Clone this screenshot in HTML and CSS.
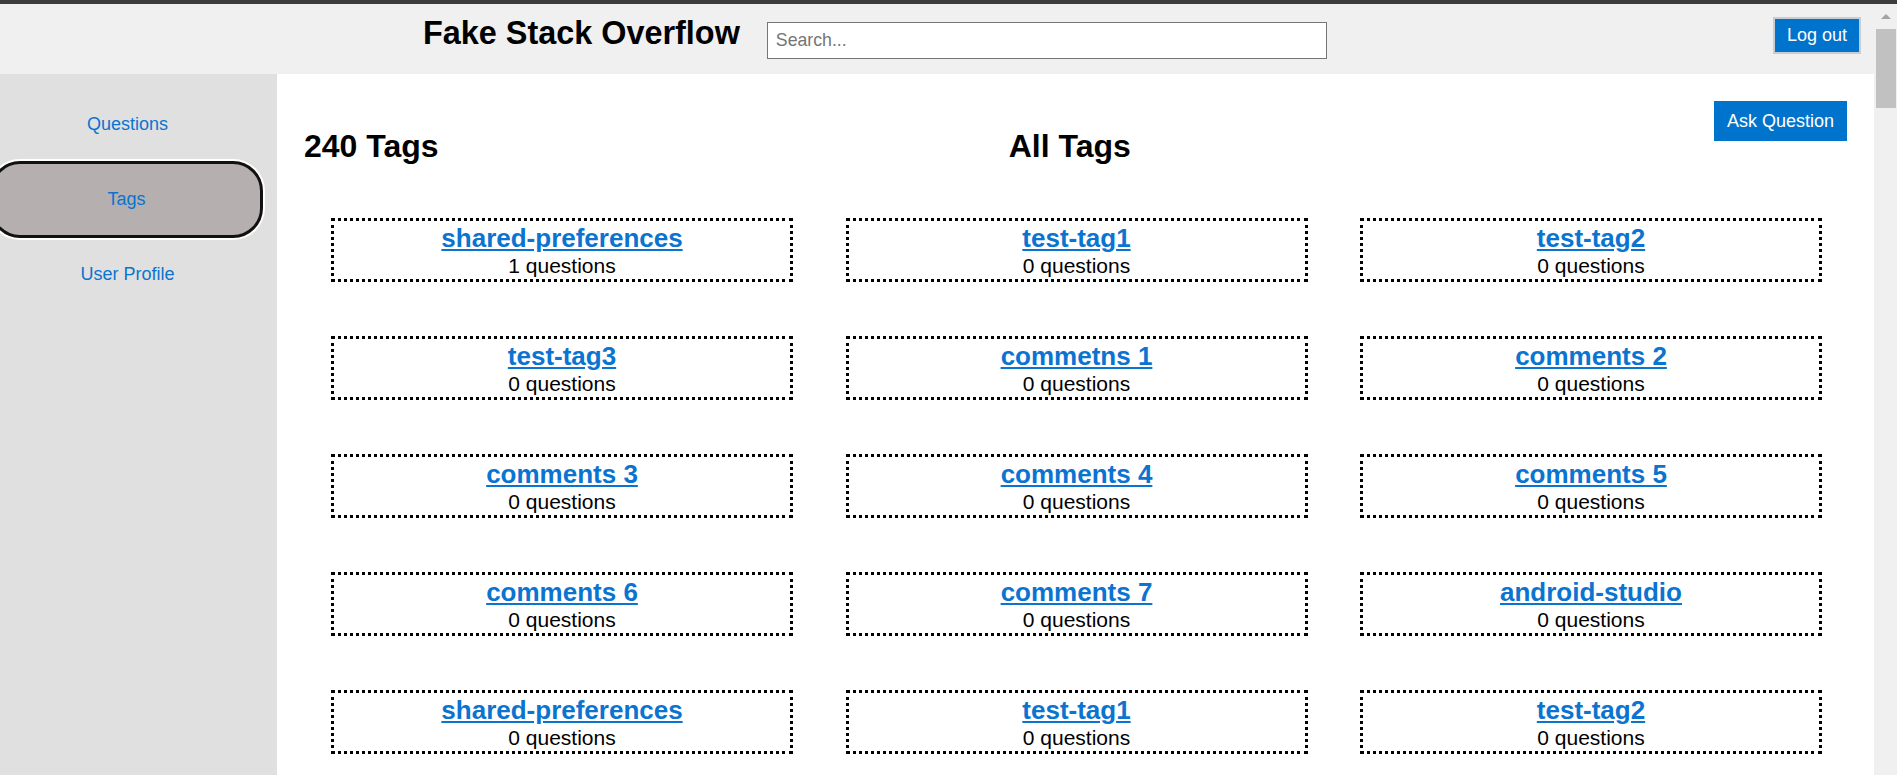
FILE: index.html
```html
<!DOCTYPE html>
<html lang="en">
<head>
<meta charset="utf-8">
<title>Fake Stack Overflow</title>
<link rel="stylesheet" href="styles.css">
</head>
<body>
<div class="topbar"></div>
<div class="frame">
  <div class="page">
    <header class="header">
      <h1 class="site-title">Fake Stack Overflow</h1>
      <input class="search" type="text" placeholder="Search...">
      <button class="logout">Log out</button>
    </header>
    <div class="content">
      <nav class="sidebar">
        <a class="nav-item" href="#">Questions</a>
        <a class="nav-item active" href="#">Tags</a>
        <a class="nav-item" href="#">User Profile</a>
      </nav>
      <main class="main">
        <div class="main-head">
          <h1 class="head-title">240 Tags</h1>
          <h1 class="head-title">All Tags</h1>
          <button class="ask">Ask Question</button>
        </div>
        <div class="tag-grid">
          <div class="tag-card"><a class="tag-name" href="#">shared-preferences</a><div class="tag-count">1 questions</div></div>
          <div class="tag-card"><a class="tag-name" href="#">test-tag1</a><div class="tag-count">0 questions</div></div>
          <div class="tag-card"><a class="tag-name" href="#">test-tag2</a><div class="tag-count">0 questions</div></div>
          <div class="tag-card"><a class="tag-name" href="#">test-tag3</a><div class="tag-count">0 questions</div></div>
          <div class="tag-card"><a class="tag-name" href="#">commetns 1</a><div class="tag-count">0 questions</div></div>
          <div class="tag-card"><a class="tag-name" href="#">comments 2</a><div class="tag-count">0 questions</div></div>
          <div class="tag-card"><a class="tag-name" href="#">comments 3</a><div class="tag-count">0 questions</div></div>
          <div class="tag-card"><a class="tag-name" href="#">comments 4</a><div class="tag-count">0 questions</div></div>
          <div class="tag-card"><a class="tag-name" href="#">comments 5</a><div class="tag-count">0 questions</div></div>
          <div class="tag-card"><a class="tag-name" href="#">comments 6</a><div class="tag-count">0 questions</div></div>
          <div class="tag-card"><a class="tag-name" href="#">comments 7</a><div class="tag-count">0 questions</div></div>
          <div class="tag-card"><a class="tag-name" href="#">android-studio</a><div class="tag-count">0 questions</div></div>
          <div class="tag-card"><a class="tag-name" href="#">shared-preferences</a><div class="tag-count">0 questions</div></div>
          <div class="tag-card"><a class="tag-name" href="#">test-tag1</a><div class="tag-count">0 questions</div></div>
          <div class="tag-card"><a class="tag-name" href="#">test-tag2</a><div class="tag-count">0 questions</div></div>
        </div>
      </main>
    </div>
  </div>
  <div class="scrollbar">
    <div class="scroll-arrow"></div>
    <div class="scroll-thumb"></div>
  </div>
</div>
</body>
</html>
```
FILE: styles.css
```css
html, body {
  margin: 0;
  padding: 0;
  height: 775px;
  overflow: hidden;
}

body {
  font-family: "Liberation Sans", Arial, Helvetica, sans-serif;
  color: #000;
  background: #fff;
}

.topbar {
  height: 4px;
  background: #3c3c3c;
}

.frame {
  display: flex;
  height: 771px;
}

.page {
  flex: 1;
  min-width: 0;
  display: flex;
  flex-direction: column;
  overflow: hidden;
}

/* Header */
.header {
  height: 70px;
  flex: none;
  display: flex;
  align-items: flex-start;
  background: #f0f0f0;
  padding: 0 13px 0 423px;
}

.site-title {
  margin: 11px 0 0;
  font-size: 32.4px;
  font-weight: bold;
  line-height: normal;
}

.search {
  margin: 18px 0 0 27px;
  width: 560px;
  height: 37px;
  box-sizing: border-box;
  border: 1px solid #767676;
  border-radius: 0;
  padding: 0 8px;
  font-family: "Liberation Sans", Arial, sans-serif;
  font-size: 17.7px;
  background: #fff;
  outline: none;
}

.search::placeholder {
  color: #757575;
}

.logout {
  margin: 13px 0 0 auto;
  background: #0074cc;
  color: #fff;
  border: 2px solid #c8cdd2;
  padding: 6px 12px;
  font-family: "Liberation Sans", Arial, sans-serif;
  font-size: 18px;
  line-height: normal;
  border-radius: 0;
}

/* Body */
.content {
  flex: 1;
  display: flex;
  min-height: 0;
}

.sidebar {
  width: 277px;
  flex: none;
  box-sizing: border-box;
  background: #e0e0e0;
  padding: 13px 22px 0 0;
  display: flex;
  flex-direction: column;
}

.nav-item {
  height: 75px;
  display: flex;
  align-items: center;
  justify-content: center;
  color: #0a74d0;
  text-decoration: none;
  font-size: 18px;
}

.nav-item.active {
  height: 77px;
  box-sizing: border-box;
  margin: -1px -8px -1px -10px;
  background: #b5b0af;
  border: 3px solid #111;
  border-radius: 30px;
  box-shadow: 0 0 0 2px #fff;
}

.main {
  flex: 1;
  background: #fff;
  padding: 27px;
  min-width: 0;
}

.main-head {
  display: flex;
  justify-content: space-between;
  align-items: flex-start;
}

.head-title {
  margin: 26.5px 0 0;
  font-size: 32px;
  font-weight: bold;
  line-height: normal;
}

.ask {
  margin-left: 13px;
  background: #0074cc;
  color: #fff;
  border: none;
  padding: 9.5px 13px;
  font-family: "Liberation Sans", Arial, sans-serif;
  font-size: 18px;
  line-height: normal;
  border-radius: 0;
}

.tag-grid {
  margin: 53.7px 0 0 27px;
  display: grid;
  grid-template-columns: repeat(3, 462px);
  column-gap: 52.5px;
  row-gap: 54px;
}

.tag-card {
  height: 64px;
  box-sizing: border-box;
  border: 3px dotted #000;
  padding: 2px;
  text-align: center;
}

.tag-name {
  font-size: 26px;
  font-weight: bold;
  color: #0a74d0;
  text-decoration: underline;
}

.tag-count {
  font-size: 21px;
}

/* Fake page scrollbar */
.scrollbar {
  width: 23px;
  flex: none;
  background: #f0f0f0;
  display: flex;
  flex-direction: column;
  align-items: center;
}

.scroll-arrow {
  margin-top: 10px;
  width: 0;
  height: 0;
  border-left: 5px solid transparent;
  border-right: 5px solid transparent;
  border-bottom: 5px solid #a3a3a3;
}

.scroll-thumb {
  margin: 10px 0 0 1px;
  width: 20px;
  height: 79px;
  background: #c1c1c1;
}
```
